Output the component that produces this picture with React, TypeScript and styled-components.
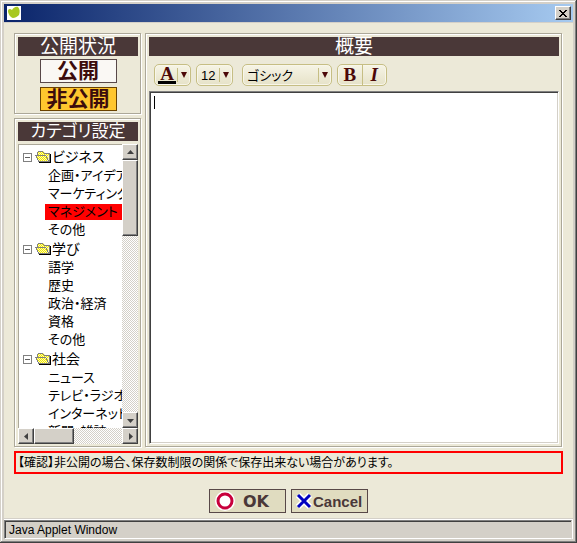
import React, { useState } from 'react';
import styled, { createGlobalStyle, css } from 'styled-components';

const jp = '"Liberation Sans", "Noto Sans CJK JP", sans-serif';

const GlobalStyle = createGlobalStyle`
  * { box-sizing: border-box; }
  body { margin: 0; background: #d4d0c8; font-family: ${jp}; font-feature-settings: "palt"; color: #000; }
  button, select, textarea { font: inherit; font-feature-settings: inherit; color: inherit; margin: 0; padding: 0; border: 0; border-radius: 0; }
  h2, ul, p { margin: 0; padding: 0; font-weight: 400; list-style: none; }
`;

const raised = css`
  background: #d4d0c8;
  border: 1px solid;
  border-color: #fff #404040 #404040 #fff;
  box-shadow: inset -1px -1px #808080;
`;

const Frame = styled.div`
  min-height: 100vh;
  display: flex;
  flex-direction: column;
  background: #ece9d8;
  border: 4px solid #d4d0c8;
  position: relative;
  &::after {
    content: '';
    position: absolute;
    inset: -4px;
    pointer-events: none;
    box-shadow: inset -1px -1px #404040, inset 1px 1px #d4d0c8, inset -2px -2px #808080, inset 2px 2px #fff;
  }
`;

const TitleBar = styled.header`
  height: 19px;
  padding: 0 2px 0 3px;
  display: flex;
  align-items: center;
  justify-content: space-between;
  background: linear-gradient(90deg, #0a246a, #a6caf0);
  border-bottom: 1px solid #d4d0c8;
`;

const CloseButton = styled.button`
  ${raised}
  width: 16px;
  height: 14px;
  display: grid;
  place-items: center;
`;

const Content = styled.main`
  flex: 1;
  display: flex;
  flex-direction: column;
  padding: 10px 10px 5px;
`;

const Columns = styled.div`
  flex: 1;
  display: grid;
  grid-template-columns: 128px 1fr;
  gap: 3px;
`;

const Side = styled.div`
  display: flex;
  flex-direction: column;
  gap: 3px;
`;

const Panel = styled.section<{ $grow?: boolean }>`
  flex: ${p => (p.$grow ? '1' : 'none')};
  display: flex;
  flex-direction: column;
  padding: 3px 2px 2px 3px;
  margin: 0 1px 1px 0;
  border: 1px solid #aca899;
  box-shadow: inset 1px 1px #fff, 1px 1px #fff;
`;

const Heading = styled.h2<{ $small?: boolean }>`
  height: 19px;
  flex: none;
  background: #4a3838;
  color: #fff;
  font-size: ${p => (p.$small ? '17px' : '19px')};
  line-height: 19px;
  text-align: center;
  white-space: nowrap;
`;

const StatusButtons = styled.div`
  display: flex;
  flex-direction: column;
  align-items: center;
  gap: 4px;
  padding: 3px 0 0;
`;

const StatusButton = styled.button<{ $on?: boolean }>`
  width: 77px;
  height: 24px;
  border: 1px solid ${p => (p.$on ? '#6a4200' : '#584848')};
  background: ${p => (p.$on ? '#ffc62e' : '#faf8f4')};
  color: #3c0c0c;
  font-size: 21px;
  line-height: 22px;
  font-weight: 700;
  font-feature-settings: normal;
`;

const TreeBox = styled.div`
  flex: 1;
  margin-top: 3px;
  display: grid;
  grid-template: minmax(0, 1fr) 16px / minmax(0, 1fr) 16px;
`;

const TreeView = styled.div`
  position: relative;
  background: #fff;
  border: solid #aca899;
  border-width: 1px 0 0 1px;
  overflow: hidden;
`;

/* Scrolled content: lies in the view without giving it height. */
const Tree = styled.ul`
  position: absolute;
  inset: 0;
  padding: 2px 0 0 4px;
  overflow: hidden;
  font-size: 14px;
  white-space: nowrap;
`;

const Category = styled.div`
  height: 20px;
  display: flex;
  align-items: center;
  line-height: 20px;
`;

const Toggle = styled.button`
  width: 9px;
  height: 9px;
  margin-right: 3px;
  flex: none;
  display: grid;
  place-items: center;
  background: #fff;
  border: 1px solid #808080;
`;

const LeafRow = styled.li`
  height: 18px;
  padding: 1px 0 1px 22px;
`;

const Leaf = styled.button<{ $on: boolean }>`
  display: block;
  width: 100%;
  height: 16px;
  padding-left: 3px;
  text-align: left;
  font-size: 13px;
  line-height: 16px;
  white-space: nowrap;
  background: ${p => (p.$on ? '#f00' : 'transparent')};
`;

const Track = styled.div<{ $row?: boolean }>`
  display: flex;
  flex-direction: ${p => (p.$row ? 'row' : 'column')};
  grid-column: ${p => (p.$row ? '1 / -1' : 'auto')};
  background: repeating-conic-gradient(#fff 0 25%, #d4d0c8 0 50%) 0 0 / 2px 2px;
`;

const ScrollButton = styled.button`
  ${raised}
  width: 16px;
  height: 16px;
  flex: none;
  display: grid;
  place-items: center;
`;

const Thumb = styled.div<{ $row?: boolean }>`
  ${raised}
  flex: 0 0 ${p => (p.$row ? '40px' : '76px')};
`;

const Spacer = styled.div`
  flex: 1;
`;

const Toolbar = styled.div`
  display: flex;
  padding: 8px 5px 5px;
`;

const tool = css`
  height: 22px;
  border: 1px solid #c6be84;
  border-radius: 5px;
  background: linear-gradient(#f6f4e6, #e6e2c8);
  box-shadow: inset 0 0 0 1px #f8f6ea;
`;

const ColorTool = styled.button`
  ${tool}
  width: 37px;
  margin-right: 5px;
  display: flex;
  align-items: center;
  padding: 0 3px;
`;

const ColorLetter = styled.span`
  width: 18px;
  height: 18px;
  border-bottom: 3px solid #000;
  color: #4c0808;
  font: 700 19px/15px "Liberation Serif", serif;
  text-align: center;
`;

const Drop = styled.span`
  margin-left: auto;
  height: 14px;
  padding-left: 3px;
  border-left: 1px solid #c6be84;
  display: flex;
  align-items: center;
  pointer-events: none;
`;

const SelectTool = styled.label<{ $wide?: boolean }>`
  ${tool}
  width: ${p => (p.$wide ? '90px' : '37px')};
  margin-right: ${p => (p.$wide ? '5px' : '9px')};
  display: flex;
  align-items: center;
  padding-right: 3px;
`;

const Select = styled.select`
  appearance: none;
  flex: 1;
  min-width: 0;
  height: 20px;
  padding-left: 4px;
  background: transparent;
  font-size: 13px;
  outline: none;
`;

const StyleGroup = styled.div`
  ${tool}
  display: flex;
  width: 50px;
`;

const StyleButton = styled.button<{ $italic?: boolean }>`
  flex: 1;
  background: transparent;
  border-left: ${p => (p.$italic ? '1px solid #c6be84' : '0')};
  color: #4c0808;
  font: ${p => (p.$italic ? 'italic' : 'normal')} 700 19px/20px "Liberation Serif", serif;
`;

const Editor = styled.div`
  flex: 1;
  display: flex;
  position: relative;
  background: #fff;
  border: 1px solid;
  border-color: #808080 #fff #fff #808080;
  box-shadow: inset 1px 1px #404040, inset -1px -1px #d4d0c8;
`;

const TextArea = styled.textarea`
  flex: 1;
  padding: 4px;
  resize: none;
  outline: none;
  background: transparent;
  font-size: 12px;
  caret-color: transparent;
`;

const Caret = styled.span`
  position: absolute;
  left: 4px;
  top: 4px;
  width: 1px;
  height: 13px;
  background: #000;
`;

const Notice = styled.p`
  margin-top: 3px;
  height: 23px;
  border: 2px solid #f00;
  padding-left: 2px;
  font-size: 12px;
  line-height: 20px;
  white-space: nowrap;
`;

const Actions = styled.div`
  display: flex;
  justify-content: center;
  gap: 5px;
  padding-top: 15px;
`;

const ActionButton = styled.button<{ $wide?: boolean }>`
  width: 77px;
  height: 24px;
  display: flex;
  align-items: center;
  gap: ${p => (p.$wide ? '8px' : '1px')};
  padding-left: ${p => (p.$wide ? '5px' : '4px')};
  background: #e0dcc0;
  border: 1px solid #584848;
  color: #4a3838;
  font: 700 ${p => (p.$wide ? '16px "DejaVu Sans"' : '15px "Liberation Sans"')}, sans-serif;
`;

const StatusBar = styled.footer`
  height: 21px;
  padding: 1px 1px 0 0;
  border-top: 1px solid #d4d0c8;
  background: #fff;
`;

const StatusText = styled.p`
  height: 19px;
  padding-left: 4px;
  background: #d4d0c8;
  border: 1px solid;
  border-color: #808080 #d4d0c8 #fff #808080;
  box-shadow: inset 1px 1px #404040;
  font-size: 12px;
  line-height: 18px;
`;

const Arrow = ({ dir }: { dir: 'up' | 'down' | 'left' | 'right' }) => {
  const d = { up: 'M0 5h7L3.5 1z', down: 'M0 2h7L3.5 6z', left: 'M5 0v7L1 3.5z', right: 'M2 0v7l4-3.5z' }[dir];
  return <svg width="7" height="7" aria-hidden="true"><path d={d} fill="#404040" /></svg>;
};

const DropMark = () => (
  <Drop><svg width="6" height="6" aria-hidden="true"><path d="M0 0h6L3 6z" fill="#4c0808" /></svg></Drop>
);

const Leaves = () => (
  <svg width="14" height="14" viewBox="0 0 14 14" aria-hidden="true">
    <path d="M0 0h14v14H0z" fill="#fff" />
    <path d="M1 5C1 3 3 2 5 4C6 2 9 0 11 1C13 3 13 6 12 9C10 11 8 12 6 12C4 12 1 8 1 5z" fill="#a8c820" />
  </svg>
);

/* Checkered yellow dots inside the folder, one row per entry: y, first x, last x. */
const DOT_ROWS = [[2, 3, 7], [3, 3, 13], [4, 3, 13], [5, 12, 13], [6, 2, 11], [7, 2, 12], [8, 3, 12], [9, 3, 13], [10, 4, 13], [11, 4, 13]];
const DOTS = DOT_ROWS.map(([y, from, to]) => {
  let d = '';
  for (let x = from; x <= to; x++) if ((x + y) % 2) d += `M${x} ${y}h1v1h-1z`;
  return d;
}).join('');

const Folder = () => (
  <svg width="17" height="14" viewBox="0 0 17 14" aria-hidden="true" shapeRendering="crispEdges">
    <path d="M2 5V2l1-1h5l2 2h5v9H4L0 5z" fill="#fffbb0" />
    <path d={DOTS} fill="#f0e800" />
    <path d="M2 5V2h1V1h5v1h1v1h6v9h-1V4H9V3H8V2H3v3zM0 5h11v1h1v2h1v2h1v2H4v-1h9v-1h-1V8h-1V6H2v2h1v2h1v2H3v-2H2V8H1V6H0z" fill="#808080" />
    <path d="M4 13v-1h11V4h1v9z" fill="#000" />
  </svg>
);

const TREE = [
  { name: 'ビジネス', items: ['企画・アイデア', 'マーケティング', 'マネジメント', 'その他'] },
  { name: '学び', items: ['語学', '歴史', '政治・経済', '資格', 'その他'] },
  { name: '社会', items: ['ニュース', 'テレビ・ラジオ', 'インターネット', '新聞・雑誌'] },
];

export default function App() {
  const [isPublic, setPublic] = useState(false);
  const [picked, setPicked] = useState('マネジメント');
  const [closed, setClosed] = useState<string[]>([]);
  const toggle = (name: string) =>
    setClosed(c => (c.includes(name) ? c.filter(n => n !== name) : [...c, name]));

  return (
    <Frame>
      <GlobalStyle />
      <TitleBar>
        <Leaves />
        <CloseButton aria-label="閉じる">
          <svg width="8" height="7" viewBox="0 0 8 7" aria-hidden="true" shapeRendering="crispEdges">
            <path d="M0 0h2v1h1v1h2V1h1V0h2v1H7v1H6v1H5v1h1v1h1v1h1v1H6V6H5V5H3v1H2v1H0V6h1V5h1V4h1V3H2V2H1V1H0z" />
          </svg>
        </CloseButton>
      </TitleBar>
      <Content>
        <Columns>
          <Side>
            <Panel>
              <Heading>公開状況</Heading>
              <StatusButtons>
                <StatusButton $on={isPublic} aria-pressed={isPublic} onClick={() => setPublic(true)}>公開</StatusButton>
                <StatusButton $on={!isPublic} aria-pressed={!isPublic} onClick={() => setPublic(false)}>非公開</StatusButton>
              </StatusButtons>
            </Panel>
            <Panel $grow>
              <Heading $small>カテゴリ設定</Heading>
              <TreeBox>
                <TreeView>
                  <Tree>
                    {TREE.map(c => (
                      <li key={c.name}>
                        <Category>
                          <Toggle aria-label={c.name} aria-expanded={!closed.includes(c.name)} onClick={() => toggle(c.name)}>
                            <svg width="5" height="1" aria-hidden="true"><path d="M0 0h5v1H0z" fill="#606060" /></svg>
                          </Toggle>
                          <Folder />
                          {c.name}
                        </Category>
                        {!closed.includes(c.name) && (
                          <ul>
                            {c.items.map(i => (
                              <LeafRow key={i}><Leaf $on={i === picked} onClick={() => setPicked(i)}>{i}</Leaf></LeafRow>
                            ))}
                          </ul>
                        )}
                      </li>
                    ))}
                  </Tree>
                </TreeView>
                <Track>
                  <ScrollButton aria-label="上へ"><Arrow dir="up" /></ScrollButton>
                  <Thumb />
                  <Spacer />
                  <ScrollButton aria-label="下へ"><Arrow dir="down" /></ScrollButton>
                </Track>
                <Track $row>
                  <ScrollButton aria-label="左へ"><Arrow dir="left" /></ScrollButton>
                  <Thumb $row />
                  <Spacer />
                  <ScrollButton aria-label="右へ"><Arrow dir="right" /></ScrollButton>
                </Track>
              </TreeBox>
            </Panel>
          </Side>
          <Panel $grow>
            <Heading>概要</Heading>
            <Toolbar>
              <ColorTool aria-label="文字色"><ColorLetter>A</ColorLetter><DropMark /></ColorTool>
              <SelectTool>
                <Select aria-label="文字サイズ" defaultValue="12"><option>12</option><option>14</option></Select>
                <DropMark />
              </SelectTool>
              <SelectTool $wide>
                <Select aria-label="フォント" defaultValue="ゴシック"><option>ゴシック</option><option>明朝</option></Select>
                <DropMark />
              </SelectTool>
              <StyleGroup>
                <StyleButton>B</StyleButton>
                <StyleButton $italic>I</StyleButton>
              </StyleGroup>
            </Toolbar>
            <Editor>
              <TextArea aria-label="概要" />
              <Caret />
            </Editor>
          </Panel>
        </Columns>
        <Notice>【確認】非公開の場合、保存数制限の関係で保存出来ない場合があります。</Notice>
        <Actions>
          <ActionButton $wide>
            <svg width="20" height="20" viewBox="0 0 20 20" aria-hidden="true">
              <circle cx="10" cy="10" r="7" fill="#fff" stroke="#fff" strokeWidth="6" />
              <circle cx="10" cy="10" r="7" fill="none" stroke="#c8003c" strokeWidth="3" />
            </svg>
            OK
          </ActionButton>
          <ActionButton>
            <svg width="16" height="18" viewBox="0 0 16 18" aria-hidden="true">
              <path d="M2 3l12 12M14 3L2 15" stroke="#fff" strokeWidth="6" />
              <path d="M2 3l12 12M14 3L2 15" stroke="#0000c0" strokeWidth="3" />
            </svg>
            Cancel
          </ActionButton>
        </Actions>
      </Content>
      <StatusBar><StatusText>Java Applet Window</StatusText></StatusBar>
    </Frame>
  );
}
